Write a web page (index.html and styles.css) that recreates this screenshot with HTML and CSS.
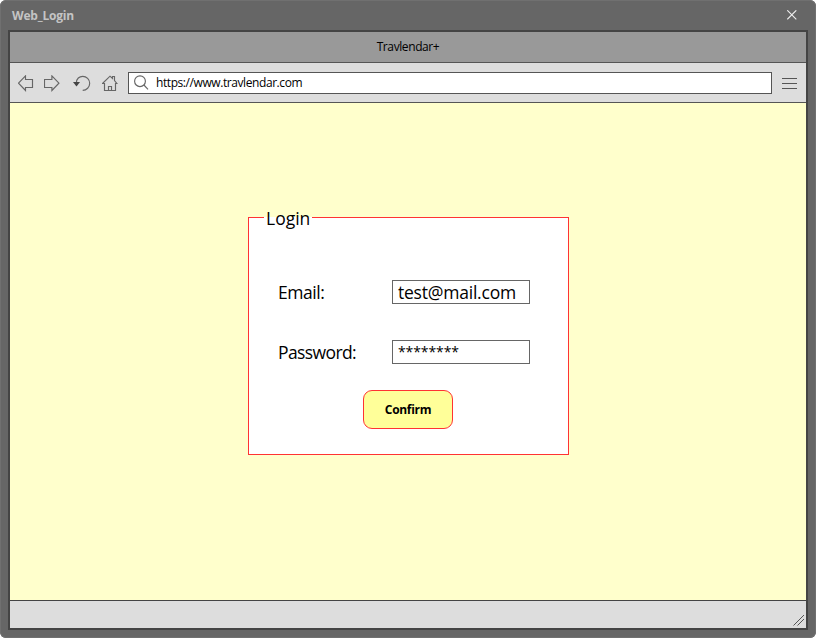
FILE: index.html
```
<!DOCTYPE html>
<html lang="en">
<head>
<meta charset="utf-8">
<title>Web_Login</title>
<link rel="stylesheet" href="styles.css">
</head>
<body>
<div class="window">
  <header class="titlebar">
    <span class="title">Web_Login</span>
    <svg class="close" width="10" height="10" viewBox="0 0 10 10"><path d="M.3.3l9 9M9.300.3l-9 9"/></svg>
  </header>
  <div class="browser">
    <div class="tab"><span>Travlendar+</span></div>
    <nav class="toolbar">
      <svg class="icon back" width="16" height="18" viewBox="0 0 16 18"><path d="M.5 8.200L7.500 .9V4.500H14.500V12.500H7.500V15.500Z"/></svg>
      <svg class="icon forward" width="16" height="18" viewBox="0 0 16 18"><path d="M14.900 8.200L7.900 .9V4.500H.5V12.500H7.900V15.500Z"/></svg>
      <svg class="icon reload" width="18" height="18" viewBox="0 0 18 18"><path d="M3.300 8C3.300 3.500 6.500 1.300 9.700 1.300A7 7 0 0 1 9.700 15.300"/><path class="solid" d="M0 7H7L3.500 11.500Z"/></svg>
      <svg class="icon home" width="16" height="18" viewBox="0 0 16 18"><path d="M.5 8.500L8 1.200L10.500 3.500V1.500H12.500V5.500L14.900 8.500H13.500V15.500H2.500V8.500ZM6.500 15.500V11.500H9.500V15.500"/></svg>
      <div class="address">
        <svg class="icon search" width="16" height="16" viewBox="0 0 16 16"><circle cx="6" cy="6.200" r="5.400"/><path d="M9.900 10L14 14.300"/></svg>
        <span>https://www.travlendar.com</span>
      </div>
      <svg class="icon menu" width="15" height="11" viewBox="0 0 15 11"><path d="M0 .5H15M0 5.500H15M0 10.500H15"/></svg>
    </nav>
    <main class="page">
      <form class="login">
        <div class="legend"><span>Login</span></div>
        <div class="row"><label class="email">Email:</label><div class="field"><span class="mail">test@mail.com</span></div></div>
        <div class="row"><label class="pass">Password:</label><div class="field"><span class="stars">********</span></div></div>
        <button class="confirm" type="button"><span>Confirm</span></button>
      </form>
    </main>
    <footer class="status">
      <svg class="grip" width="12" height="12" viewBox="0 0 12 12"><path d="M.5 11.500L11 1M4.500 11.500L11 5"/></svg>
    </footer>
  </div>
</div>
</body>
</html>
```
FILE: styles.css
```
* { box-sizing: border-box; }
body { margin: 0; background: #fff; font-family: "Open Sans", "Noto Sans", sans-serif; color: #000; }
svg { display: block; flex: none; fill: none; }
span, label { white-space: nowrap; }
.window { width: 816px; height: 638px; padding: 0 8px 8px; background: #666; border-radius: 6px; box-shadow: inset 0 0 0 1px #707070; }
.titlebar { height: 30px; display: flex; justify-content: space-between; padding: 10px 11px 0 4px; }
.title { font-size: 12px; line-height: 12px; font-weight: 700; color: #c4c4c4; letter-spacing: -.2px; }
.close { stroke: #eee; stroke-width: 1.1; }
.browser { height: 600px; border: 2px solid #444; display: flex; flex-direction: column; }
.tab { height: 31px; background: #999; border-bottom: 1px solid #555; text-align: center; font-size: 12px; line-height: 30px; letter-spacing: -.4px; }
.toolbar { height: 40px; background: #ddd; border-bottom: 1px solid #555; display: flex; align-items: flex-start; padding: 9px 9px 0 8px; }
.icon { stroke: #666; stroke-width: 1.15; }
.back, .forward, .reload, .home { margin-top: 3px; }
.forward { margin-left: 10px; }
.reload { margin-left: 13px; }
.home { margin-left: 11px; }
.solid { fill: #444; stroke: none; }
.address { width: 644px; height: 22px; margin-left: 10px; background: #fff; border: 1px solid #555; display: flex; padding: 2px 0 0 5px; }
.address span { margin-left: 6px; font-size: 12px; line-height: 15px; letter-spacing: -.42px; }
.menu { margin: 6px 0 0 10px; stroke: #555; stroke-width: 1; }
.page { height: 497px; background: #ffc; padding: 114px 0 0 238px; }
.login { position: relative; width: 321px; height: 238px; background: #fff; border: 1px solid #f33; padding: 62px 0 0 29px; font-size: 17.5px; }
.legend { position: absolute; left: 15px; top: -1px; width: 48px; height: 18px; background: #fff; padding-left: 2px; }
.legend span { display: block; line-height: 24px; margin-top: -11px; }
.row { display: flex; height: 24px; margin-bottom: 36px; line-height: 24px; }
.row label { width: 114px; }
.email { letter-spacing: -.45px; }
.pass { letter-spacing: -.6px; }
.field { width: 138px; height: 24px; border: 1px solid #666; line-height: 22px; padding-left: 5px; }
.field span { display: block; }
.mail { letter-spacing: -.22px; }
.stars { font-size: 14px; letter-spacing: -.1px; }
.confirm { display: block; width: 90px; height: 39px; margin: -10px 0 0 85px; padding: 0; background: #ff9; border: 1px solid #f33; border-radius: 9px; font: 700 12px "Open Sans", sans-serif; letter-spacing: -.3px; color: #000; }
.status { height: 28px; background: #ddd; border-top: 1px solid #444; display: flex; justify-content: flex-end; padding: 13px 1px 0 0; }
.grip { stroke: #555; stroke-width: 1; }
```
